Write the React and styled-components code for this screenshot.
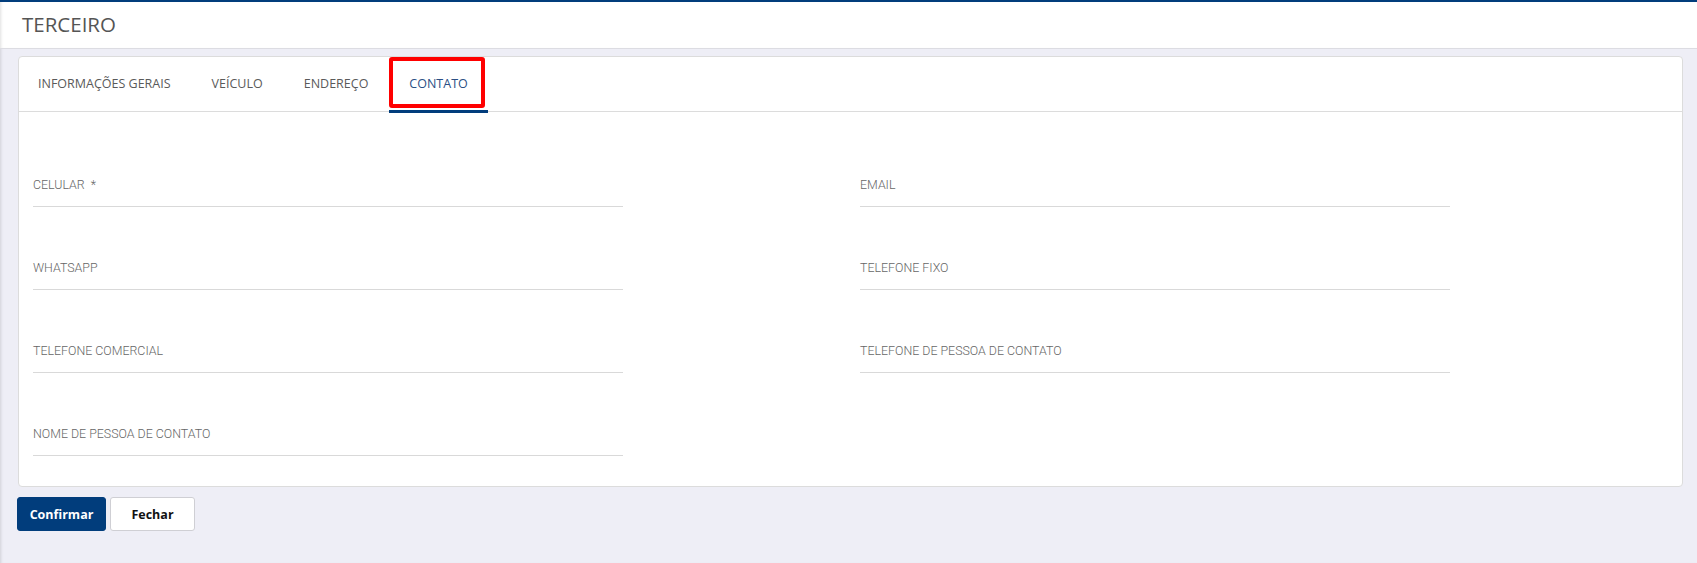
import React from 'react'
import styled, { createGlobalStyle } from 'styled-components'

const GlobalStyle = createGlobalStyle`
  html, body {
    margin: 0;
    padding: 0;
    background: #eeeef6;
  }
  * {
    box-sizing: border-box;
  }
`

const Page = styled.div`
  min-height: 563px;
  background: #eeeef6;
  box-shadow: inset 3px 0 3px -2px rgba(0, 0, 0, 0.12);
  font-family: 'Open Sans', 'Liberation Sans', sans-serif;
`

const Header = styled.header`
  background: #fff;
  border-top: 2px solid #013d7c;
  border-bottom: 1px solid #dcdce2;
  height: 49px;
  padding: 9px 22px 0;
  box-shadow: inset 3px 0 3px -2px rgba(0, 0, 0, 0.12);
`

const Title = styled.h1`
  margin: 0;
  font-size: 20.5px;
  line-height: 27px;
  font-weight: 400;
  color: #555;
`

const Main = styled.main`
  padding: 7px 14px 0 18px;
`

const Card = styled.section`
  background: #fff;
  border: 1px solid #dcdcdc;
  border-radius: 4px;
`

const TabBar = styled.nav`
  display: flex;
  height: 55px;
  border-bottom: 1px solid #dcdcdc;
  margin-left: -1.5px;
`

const Tab = styled.div`
  position: relative;
  display: flex;
  align-items: center;
  padding: 0 20.5px;
  font-size: 12.5px;
  color: ${(p) => (p.$active ? '#2b4f84' : '#5a5a5a')};
  border-bottom: ${(p) => (p.$active ? '3px solid #013d7c' : '3px solid transparent')};
  margin-bottom: -2px;
  white-space: nowrap;
`

/* red highlight drawn around the selected tab */
const Highlight = styled.span`
  position: absolute;
  left: 0;
  right: 3px;
  top: 0;
  bottom: 2px;
  border: 4px solid #ff0000;
  border-radius: 3px;
  pointer-events: none;
`

const FormBody = styled.div`
  display: grid;
  grid-template-columns: 590px 590px;
  column-gap: 237px;
  row-gap: 53px;
  padding: 65px 14px 30px;
`

const Field = styled.div`
  display: flex;
  flex-direction: column;
`

const Label = styled.label`
  font-family: Roboto, 'Liberation Sans', sans-serif;
  font-size: 12.4px;
  line-height: 16px;
  font-weight: 300;
  color: #666;
  margin-bottom: 13px;
  white-space: pre;
`

const Line = styled.div`
  height: 1px;
  background: #d9d9d9;
`

const Actions = styled.div`
  display: flex;
  gap: 4px;
  padding-top: 10px;
  margin-left: -1px;
`

const Button = styled.button`
  height: 34px;
  width: ${(p) => p.$width}px;
  border-radius: 3px;
  font-family: 'Open Sans', 'Liberation Sans', sans-serif;
  font-size: 12.5px;
  font-weight: 700;
  cursor: pointer;
  background: ${(p) => (p.$primary ? '#013d7c' : '#fff')};
  color: ${(p) => (p.$primary ? '#fff' : '#111')};
  border: 1px solid ${(p) => (p.$primary ? '#013d7c' : '#cfcfd4')};
`

const tabs = ['INFORMAÇÕES GERAIS', 'VEÍCULO', 'ENDEREÇO', 'CONTATO']

const fields = [
  'CELULAR  *',
  'EMAIL',
  'WHATSAPP',
  'TELEFONE FIXO',
  'TELEFONE COMERCIAL',
  'TELEFONE DE PESSOA DE CONTATO',
  'NOME DE PESSOA DE CONTATO',
]

const App = () => {
  return (
    <Page>
      <GlobalStyle />
      <Header>
        <Title>TERCEIRO</Title>
      </Header>
      <Main>
        <Card>
          <TabBar>
            {tabs.map((t) => (
              <Tab key={t} $active={t === 'CONTATO'}>
                {t}
                {t === 'CONTATO' && <Highlight />}
              </Tab>
            ))}
          </TabBar>
          <FormBody>
            {fields.map((f) => (
              <Field key={f}>
                <Label>{f}</Label>
                <Line />
              </Field>
            ))}
          </FormBody>
        </Card>
        <Actions>
          <Button $primary $width={89}>Confirmar</Button>
          <Button $width={85}>Fechar</Button>
        </Actions>
      </Main>
    </Page>
  )
}

export default App
